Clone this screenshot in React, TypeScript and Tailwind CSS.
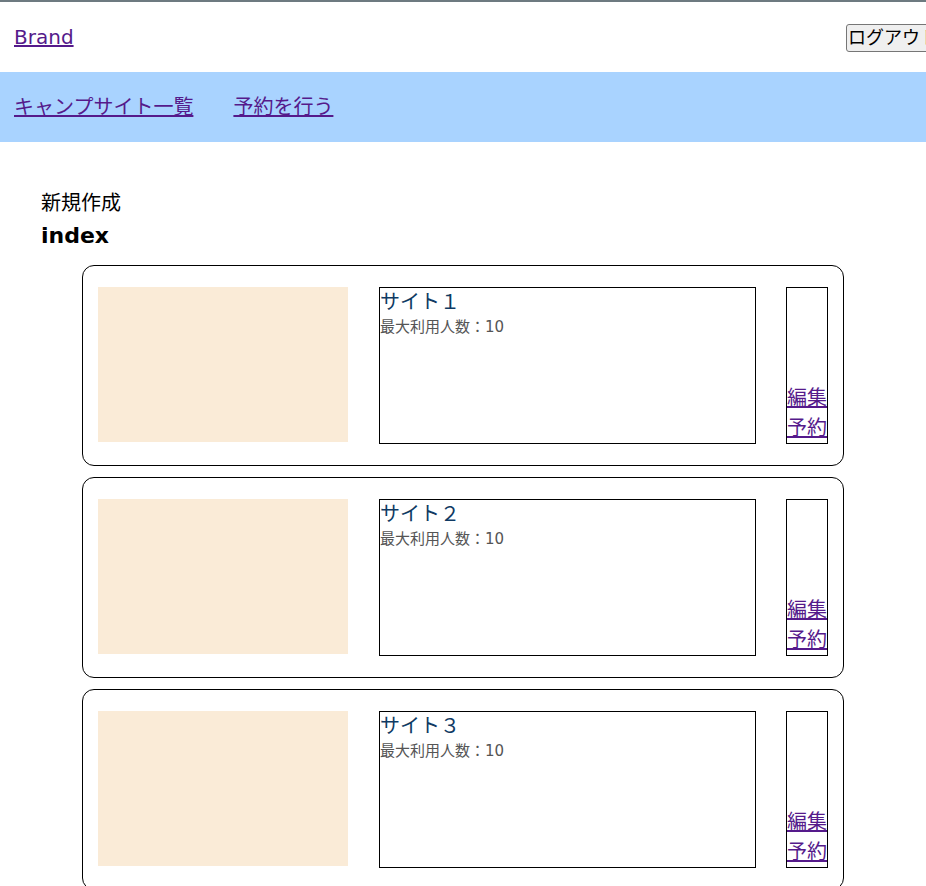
import React from 'react';

const sites = [
  { id: 1, name: 'サイト１', capacity: 10 },
  { id: 2, name: 'サイト２', capacity: 10 },
  { id: 3, name: 'サイト３', capacity: 10 },
];

const font = "font-['DejaVu_Sans','Noto_Sans_CJK_JP',sans-serif]";

const SiteCard = ({ name, capacity }: { name: string; capacity: number }) => (
  <div className="flex items-start border border-black rounded-[12px] pt-[21px] pb-[21px] pl-[15px] pr-[16px]">
    <div className="w-[250px] h-[155px] bg-[#faebd7] shrink-0"></div>
    <div className="ml-[31px] w-[377px] h-[157px] border border-black shrink-0">
      <p className="text-[20px] leading-[28px] text-[#0f3a63]">{name}</p>
      <p className="text-[15px] leading-[22px] text-[#555]">最大利用人数：{capacity}</p>
    </div>
    <div className="ml-[30px] w-[42px] h-[157px] border border-black flex flex-col justify-end shrink-0">
      <a href="#" className="text-[20px] leading-[30px] text-[#551a8b] underline">編集</a>
      <a href="#" className="text-[20px] leading-[30px] text-[#551a8b] underline">予約</a>
    </div>
  </div>
);

const App = () => {
  return (
    <div className={`min-h-screen bg-white border-t-2 border-[#6d7a80] overflow-x-hidden ${font}`}>
      <header className="h-[70px] flex items-center justify-between pl-[14px]">
        <a href="#" className="text-[20px] leading-[30px] text-[#551a8b] underline">Brand</a>
        <button className="mr-[-14px] mt-[2px] h-[28px] px-[1px] text-[18px] leading-[24px] text-black bg-[#efefef] border border-[#767676] rounded-[3px] whitespace-nowrap shrink-0">
          ログアウト
        </button>
      </header>
      <nav className="h-[70px] bg-[#a9d3ff] flex items-center gap-[40px] px-[14px]">
        <a href="#" className="text-[20px] leading-[30px] text-[#551a8b] underline">キャンプサイト一覧</a>
        <a href="#" className="text-[20px] leading-[30px] text-[#551a8b] underline">予約を行う</a>
      </nav>
      <main className="px-[41px] pt-[46px] pb-[20px]">
        <p className="text-[20px] leading-[30px] text-black">新規作成</p>
        <h1 className="mt-[3px] text-[22px] leading-[30px] font-bold text-black">index</h1>
        <div className="mt-[14px] mx-[41px] flex flex-col gap-[11px]">
          {sites.map((site) => (
            <SiteCard key={site.id} name={site.name} capacity={site.capacity} />
          ))}
        </div>
      </main>
    </div>
  );
};

export default App;
